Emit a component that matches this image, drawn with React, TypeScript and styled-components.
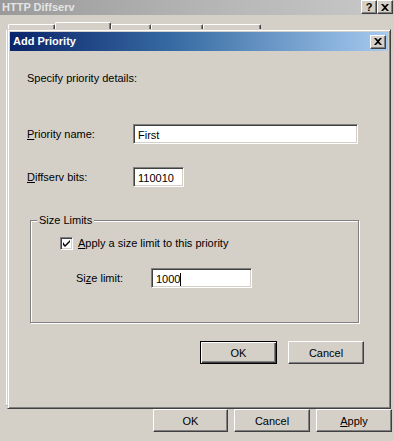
import React from "react";
import styled, { createGlobalStyle } from "styled-components";

const Global = createGlobalStyle`
  html, body { margin: 0; padding: 0; background: #d4d0c8; }
  body { font-family: "Liberation Sans", Arial, sans-serif; font-size: 11px; color: #000; }
  * { box-sizing: border-box; }
`;

const Window = styled.div`
  position: relative;
  width: 394px;
  height: 441px;
  background: #d4d0c8;
  display: flex;
  flex-direction: column;
  overflow: hidden;
`;

const TitleBar = styled.div<{ $active?: boolean }>`
  display: flex;
  align-items: center;
  height: ${(p) => (p.$active ? 19 : 15)}px;
  padding: ${(p) => (p.$active ? "0 2px 0 3px" : "0 1px 1px 2px")};
  background: ${(p) =>
    p.$active
      ? "linear-gradient(to right, #0a246a 0%, #3a6ea5 45%, #a6caf0 100%)"
      : "linear-gradient(to right, #9a9a9a 0%, #b4b4b4 50%, #c8c8c8 100%)"};
  color: ${(p) => (p.$active ? "#fff" : "#e4e4e4")};
  font-weight: bold;
  font-size: 11px;
`;

const TitleText = styled.span`
  flex: 1;
  white-space: nowrap;
  line-height: 13px;
`;

const CaptionButtons = styled.div`
  display: flex;
  align-self: flex-start;
`;

const CaptionButton = styled.div`
  width: 16px;
  height: 14px;
  background: #d4d0c8;
  border-top: 1px solid #fff;
  border-left: 1px solid #fff;
  border-right: 1px solid #404040;
  border-bottom: 1px solid #404040;
  box-shadow: inset -1px -1px 0 #808080;
  display: flex;
  align-items: center;
  justify-content: center;
  color: #000;
  font-weight: bold;
  font-size: 11px;
  line-height: 11px;
`;

const TabStrip = styled.div`
  display: flex;
  align-items: flex-end;
  height: 15px;
  padding-left: 8px;
`;

const Tab = styled.div<{ $w: number; $sel?: boolean }>`
  width: ${(p) => p.$w}px;
  height: ${(p) => (p.$sel ? 8 : 6)}px;
  border-top: 1px solid #fff;
  border-left: 1px solid #fff;
  border-right: 1px solid #404040;
  border-radius: 2px 2px 0 0;
  box-shadow: inset -1px 0 0 #808080;
`;

const TabPage = styled.div`
  flex: 1;
  margin: 0 3px 0 6px;
  border-left: 1px solid #fff;
  border-top: 1px solid #fff;
  border-right: 1px solid #404040;
  border-bottom: 1px solid #404040;
`;

const SheetButtons = styled.div`
  display: flex;
  justify-content: flex-end;
  gap: 6px;
  padding: 3px 2px 9px 0;
`;

const Button = styled.button<{ $w?: number; $default?: boolean }>`
  width: ${(p) => p.$w ?? 75}px;
  height: 23px;
  padding: 0;
  background: #d4d0c8;
  font-family: "Liberation Sans", Arial, sans-serif;
  font-size: 11px;
  color: #000;
  border-top: 1px solid #fff;
  border-left: 1px solid #fff;
  border-right: 1px solid #404040;
  border-bottom: 1px solid #404040;
  box-shadow: inset -1px -1px 0 #808080;
  outline: none;
  cursor: default;
  ${(p) =>
    p.$default
      ? `border-color: #000; box-shadow: inset 1px 1px 0 #fff, inset -1px -1px 0 #404040, inset -2px -2px 0 #808080;`
      : ""}
`;

const U = styled.span`
  text-decoration: underline;
  text-underline-offset: 1px;
`;

const Dialog = styled.div`
  position: absolute;
  left: 7px;
  top: 29px;
  width: 384px;
  height: 380px;
  background: #d4d0c8;
  border: 1px solid;
  border-color: #d4d0c8 #404040 #404040 #d4d0c8;
  box-shadow: inset 1px 1px 0 #fff, inset -1px -1px 0 #808080;
  padding: 2px;
  display: flex;
  flex-direction: column;
`;

const DialogBody = styled.div`
  display: flex;
  flex-direction: column;
  padding: 21px 24px 0 17px;
`;

const Intro = styled.div`
  line-height: 13px;
  height: 13px;
`;

const FieldRow = styled.div<{ $mt: number; $labelW: number; $indent?: number }>`
  display: grid;
  grid-template-columns: ${(p) => p.$labelW}px auto;
  align-items: center;
  margin-top: ${(p) => p.$mt}px;
  padding-left: ${(p) => p.$indent ?? 0}px;
  justify-content: start;
`;

const Label = styled.label`
  line-height: 13px;
  white-space: nowrap;
`;

const TextBox = styled.div<{ $w: number }>`
  width: ${(p) => p.$w}px;
  height: 20px;
  background: #fff;
  border: 1px solid;
  border-color: #808080 #fff #fff #808080;
  box-shadow: inset 1px 1px 0 #404040, inset -1px -1px 0 #d4d0c8;
  padding: 2px 3px 0 4px;
  line-height: 14px;
  white-space: nowrap;
  overflow: hidden;
  display: flex;
  align-items: center;
`;

const Caret = styled.span`
  display: inline-block;
  width: 1px;
  height: 13px;
  background: #000;
`;

const GroupBox = styled.div`
  position: relative;
  margin: 33px 0 0 3px;
  width: 329px;
  height: 103px;
  border: 1px solid #808080;
  box-shadow: inset 1px 1px 0 #fff, 1px 1px 0 #fff;
  padding: 16px 0 0 29px;
  display: flex;
  flex-direction: column;
`;

const Legend = styled.span`
  position: absolute;
  top: -7px;
  left: 6px;
  padding: 0 2px;
  background: #d4d0c8;
  line-height: 13px;
`;

const CheckRow = styled.div`
  display: flex;
  align-items: center;
  gap: 5px;
`;

const CheckBox = styled.div`
  width: 13px;
  height: 13px;
  background: #fff;
  border: 1px solid;
  border-color: #808080 #fff #fff #808080;
  box-shadow: inset 1px 1px 0 #404040, inset -1px -1px 0 #d4d0c8;
  display: flex;
  align-items: center;
  justify-content: center;
`;

const DialogButtons = styled.div`
  display: flex;
  justify-content: flex-end;
  gap: 11px;
  margin-top: 18px;
`;

const CloseGlyph = () => (
  <svg width="8" height="7" viewBox="0 0 8 7">
    <path d="M0 0h2l2 2 2-2h2L5 3.5 8 7H6L4 5 2 7H0l3-3.5z" fill="#000" />
  </svg>
);

export default function App() {
  return (
    <>
      <Global />
      <Window>
        <TitleBar>
          <TitleText>HTTP Diffserv</TitleText>
          <CaptionButtons>
            <CaptionButton>?</CaptionButton>
            <CaptionButton>
              <CloseGlyph />
            </CaptionButton>
          </CaptionButtons>
        </TitleBar>
        <TabStrip>
          <Tab $w={47} />
          <Tab $w={56} $sel />
          <Tab $w={40} />
          <Tab $w={52} />
          <Tab $w={58} />
        </TabStrip>
        <TabPage />
        <SheetButtons>
          <Button>OK</Button>
          <Button $w={76}>Cancel</Button>
          <Button $w={76}>
            <U>A</U>pply
          </Button>
        </SheetButtons>

        <Dialog>
          <TitleBar $active>
            <TitleText>Add Priority</TitleText>
            <CaptionButton>
              <CloseGlyph />
            </CaptionButton>
          </TitleBar>
          <DialogBody>
            <Intro>Specify priority details:</Intro>
            <FieldRow $mt={39} $labelW={106}>
              <Label>
                <U>P</U>riority name:
              </Label>
              <TextBox $w={225}>First</TextBox>
            </FieldRow>
            <FieldRow $mt={23} $labelW={106}>
              <Label>
                <U>D</U>iffserv bits:
              </Label>
              <TextBox $w={51}>110010</TextBox>
            </FieldRow>
            <GroupBox>
              <Legend>Size Limits</Legend>
              <CheckRow>
                <CheckBox>
                  <svg width="7" height="7" viewBox="0 0 7 7">
                    <path d="M0 2v3l2 2 5-5V0L2 5z" fill="#000" />
                  </svg>
                </CheckBox>
                <Label>
                  <U>A</U>pply a size limit to this priority
                </Label>
              </CheckRow>
              <FieldRow $mt={18} $labelW={75} $indent={16}>
                <Label>
                  Si<U>z</U>e limit:
                </Label>
                <TextBox $w={101}>
                  1000
                  <Caret />
                </TextBox>
              </FieldRow>
            </GroupBox>
            <DialogButtons>
              <Button $w={77} $default>
                OK
              </Button>
              <Button $w={76}>Cancel</Button>
            </DialogButtons>
          </DialogBody>
        </Dialog>
      </Window>
    </>
  );
}
